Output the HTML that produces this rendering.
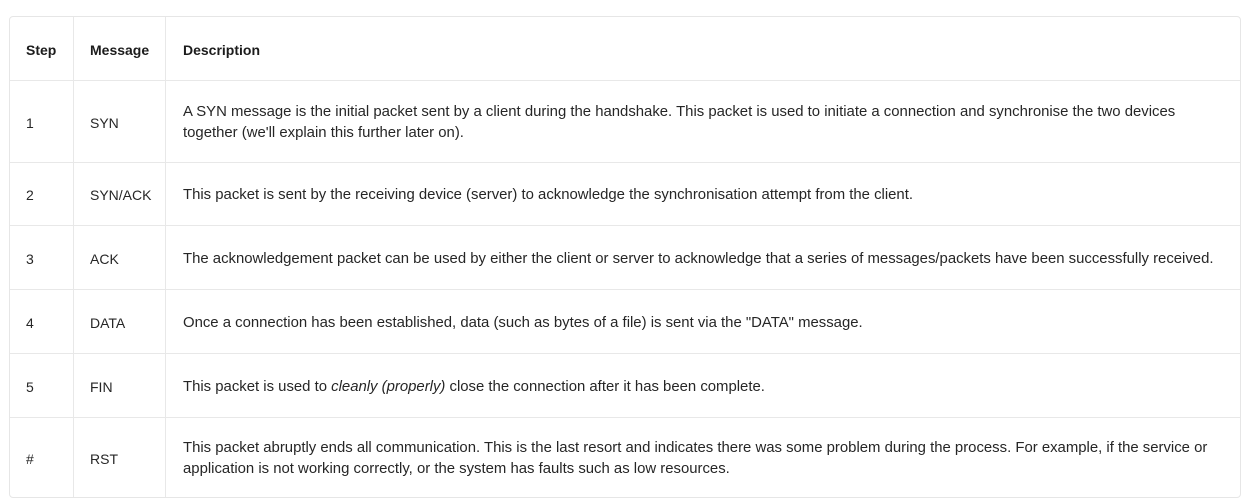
<!DOCTYPE html>
<html><head><style>
html,body{margin:0;padding:0;background:#fff;width:1256px;height:503px;overflow:hidden}
.box{position:absolute;left:9px;top:16px;width:1230px;height:480px;border:1px solid #e6e6e6;border-radius:4px;overflow:hidden}
table{border-collapse:collapse;width:100%;font-family:"Liberation Sans",sans-serif;font-size:14.9px;color:#262626}
td,th{border-right:1px solid #e8e8e8;border-bottom:1px solid #e8e8e8;text-align:left;vertical-align:middle;padding:4px 0 0 16px;white-space:nowrap;line-height:21px}
td:last-child,th:last-child{border-right:none}
tr:last-child td{border-bottom:none}
th{font-weight:bold;color:#1c1c1c;font-size:14px}
td.s{font-size:14px}
.c1{width:47px}.c2{width:75px}.c3{padding-left:17px}
</style></head><body>
<div class="box"><table>
<tr style="height:63px"><th class="c1">Step</th><th class="c2">Message</th><th class="c3">Description</th></tr>
<tr style="height:82px"><td class="s">1</td><td class="s">SYN</td><td class="c3">A SYN message is the initial packet sent by a client during the handshake. This packet is used to initiate a connection and synchronise the two devices<br>together (we'll explain this further later on).</td></tr>
<tr style="height:63px"><td class="s">2</td><td class="s">SYN/ACK</td><td class="c3">This packet is sent by the receiving device (server) to acknowledge the synchronisation attempt from the client.</td></tr>
<tr style="height:64px"><td class="s">3</td><td class="s">ACK</td><td class="c3">The acknowledgement packet can be used by either the client or server to acknowledge that a series of messages/packets have been successfully received.</td></tr>
<tr style="height:64px"><td class="s">4</td><td class="s">DATA</td><td class="c3">Once a connection has been established, data (such as bytes of a file) is sent via the "DATA" message.</td></tr>
<tr style="height:64px"><td class="s">5</td><td class="s">FIN</td><td class="c3">This packet is used to <i>cleanly (properly)</i> close the connection after it has been complete.</td></tr>
<tr style="height:80px"><td class="s">#</td><td class="s">RST</td><td class="c3">This packet abruptly ends all communication. This is the last resort and indicates there was some problem during the process. For example, if the service or<br>application is not working correctly, or the system has faults such as low resources.</td></tr>
</table></div>
</body></html>
